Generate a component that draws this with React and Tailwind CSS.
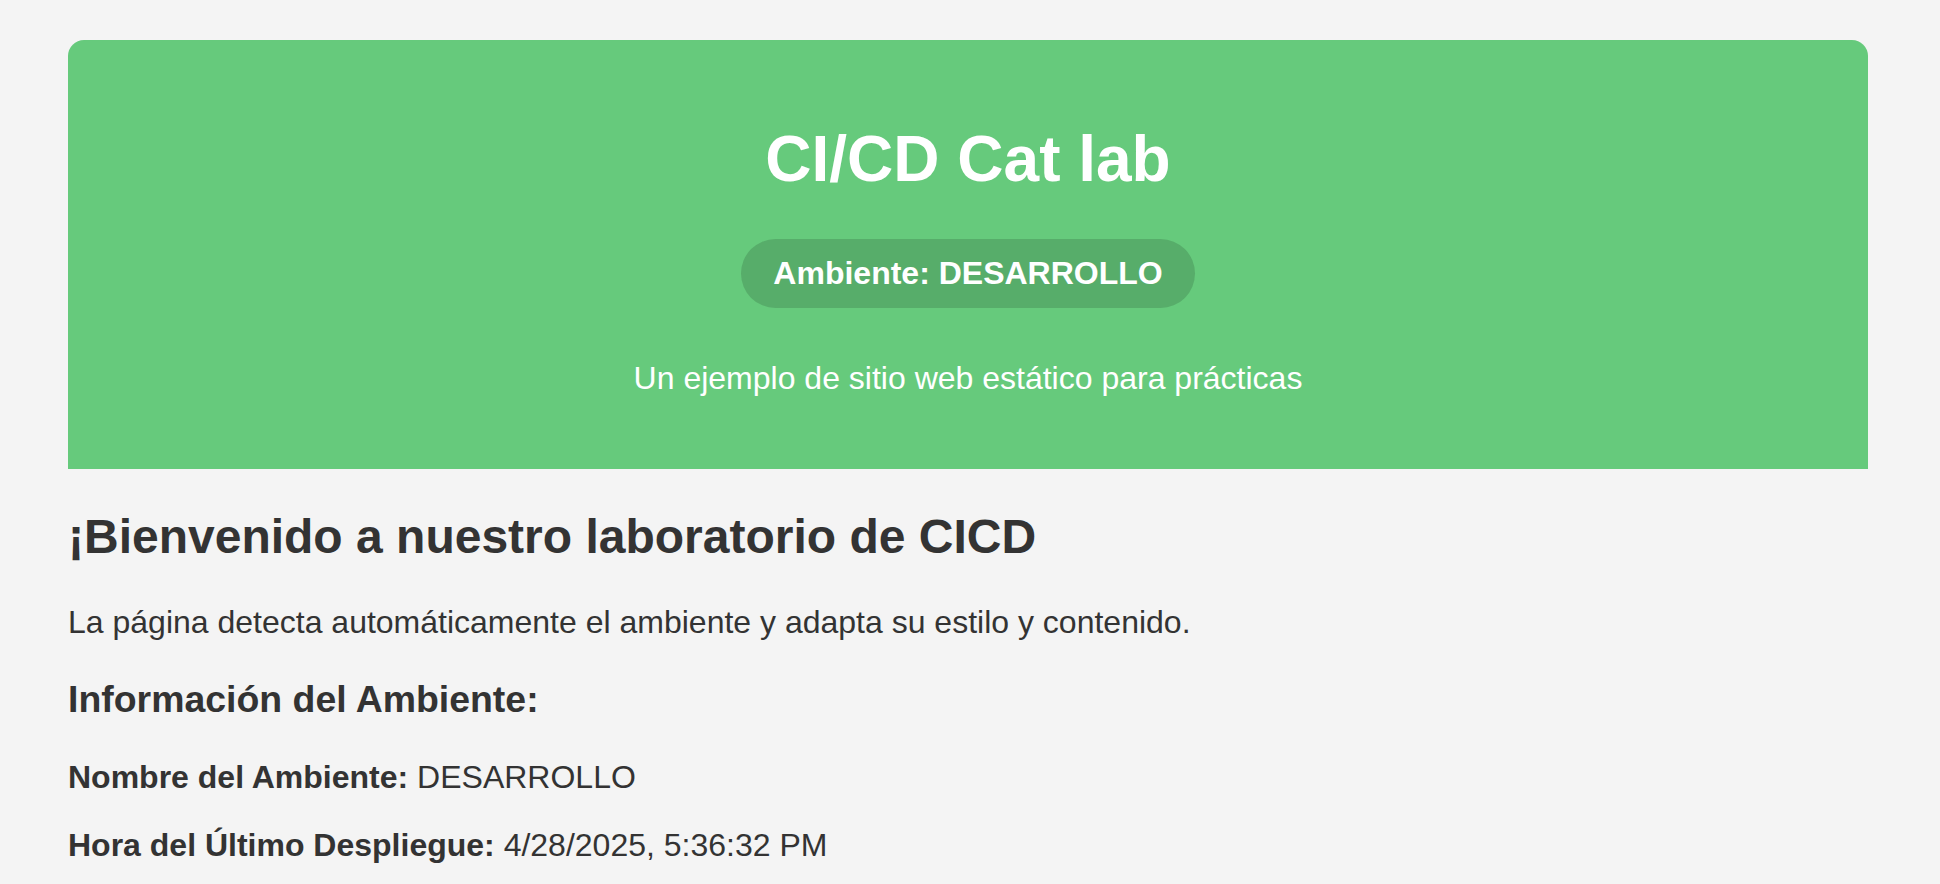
export default function App() {
  return (
    <div className="min-h-screen bg-[#f4f4f4] text-[#333333] text-[32px] leading-[1.15] [font-family:'Liberation_Sans',Arial,sans-serif]">
      <div className="ml-[68px] w-[1800px] pt-[40px]">
        {/* Cabecera */}
        <header className="bg-[#66ca7c] text-white text-center rounded-t-[16px] p-[40px]">
          <h1 className="text-[64px] font-bold leading-[1.15] my-[42.88px]">CI/CD Cat lab</h1>
          <div className="mb-[52px]">
            <span className="inline-block rounded-full bg-[#57ad6a] px-[32px] py-[16px] font-bold">
              Ambiente: DESARROLLO
            </span>
          </div>
          <p className="my-[32px]">Un ejemplo de sitio web estático para prácticas</p>
        </header>

        {/* Contenido */}
        <main>
          <h2 className="text-[48px] font-bold my-[39.84px]">¡Bienvenido a nuestro laboratorio de CICD</h2>
          <p className="my-[32px]">La página detecta automáticamente el ambiente y adapta su estilo y contenido.</p>
          <h3 className="text-[37.44px] font-bold my-[37.44px]">Información del Ambiente:</h3>
          <p className="my-[32px]">
            <strong className="font-bold">Nombre del Ambiente:</strong> DESARROLLO
          </p>
          <p className="my-[32px]">
            <strong className="font-bold">Hora del Último Despliegue:</strong> 4/28/2025, 5:36:32 PM
          </p>
        </main>
      </div>
    </div>
  );
}
